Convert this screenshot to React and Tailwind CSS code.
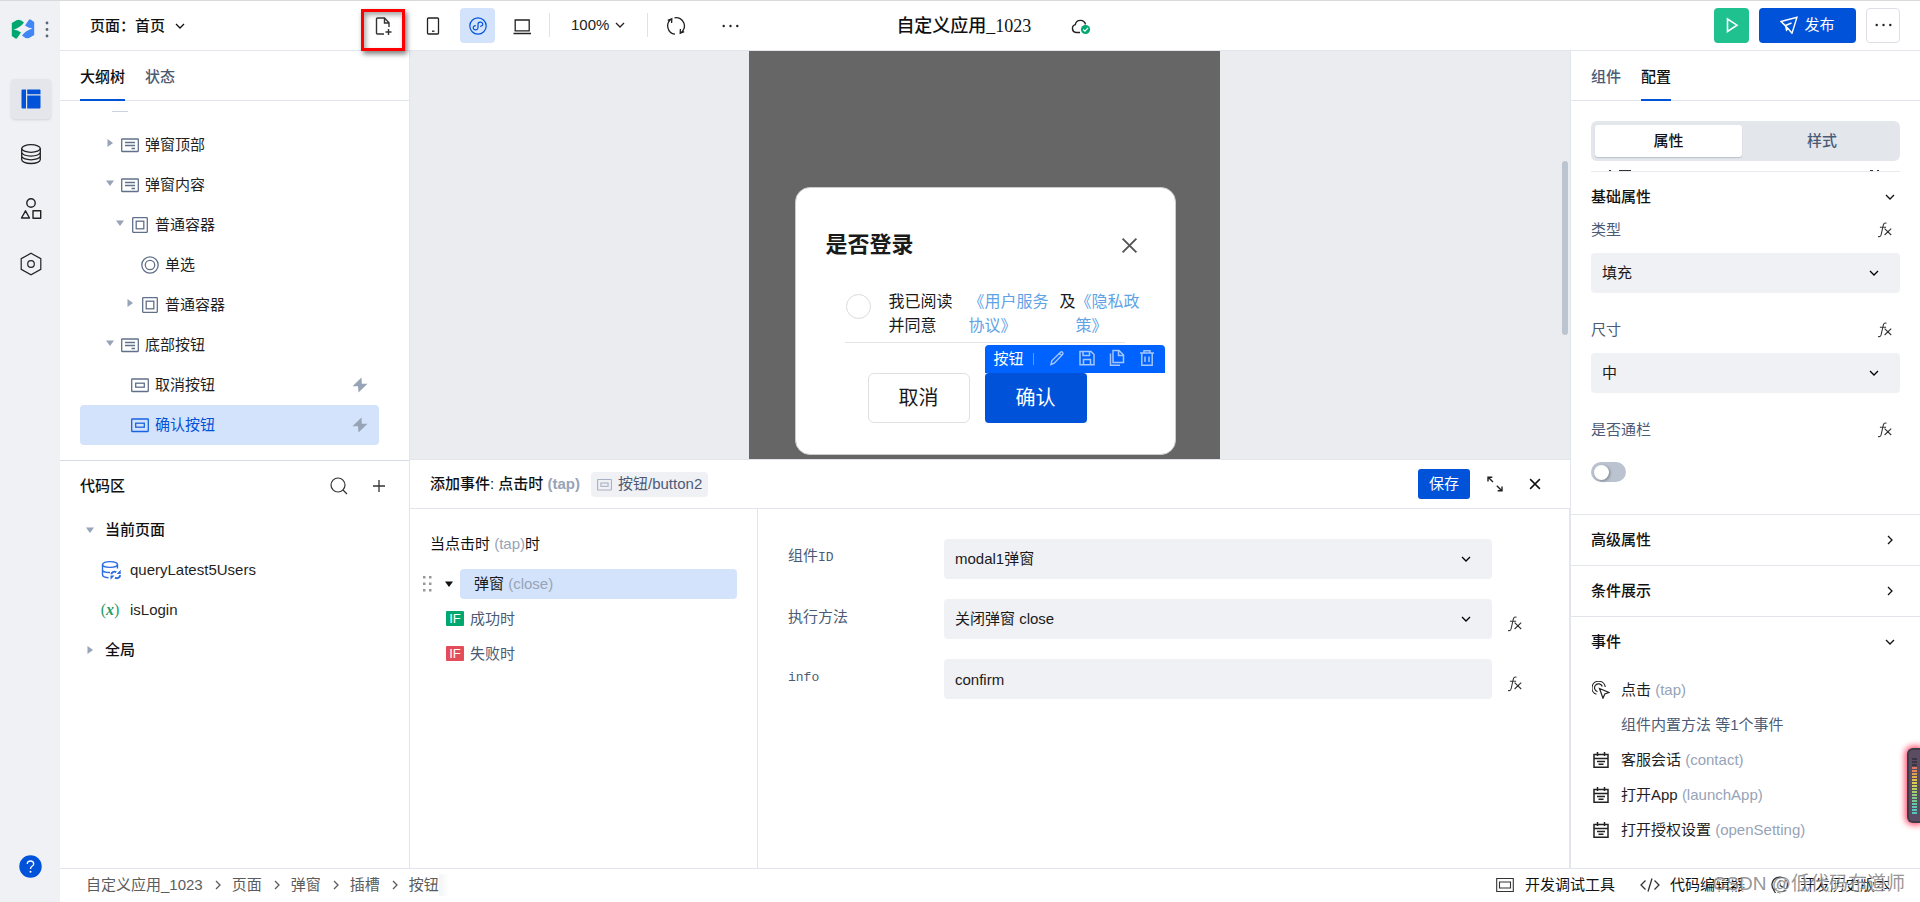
import React from "react";

/* ---------- icons ---------- */

function Icon({ size = 18, box = 18, sw = 1.3, className = "", children }) {
  return (
    <svg
      width={size}
      height={size}
      viewBox={`0 0 ${box} ${box}`}
      fill="none"
      stroke="currentColor"
      strokeWidth={sw}
      className={`shrink-0 ${className}`}
      aria-hidden="true"
    >
      {children}
    </svg>
  );
}

const Logo = () => (
  <svg width="24" height="20" viewBox="0 0 24 20" aria-hidden="true" className="shrink-0">
    <path d="M0.800 4 5.500 1.200Q9-0.500 13 3.400Q9.500 8.500 2.500 10.500Q7 11.200 10 13.600L6 19.200Q5.300 20 4.500 19.400L0.800 17z" fill="#00a870" />
    <path d="M23.200 16 18.500 18.800Q15 20.500 11 16.600Q14.500 11.500 21.500 9.500Q17 8.800 14 6.400L18 0.800Q18.700 0 19.500 0.600L23.200 3z" fill="#4086f5" />
  </svg>
);

const Chevron = ({ dir = "down", size = 10, className = "" }) => (
  <Icon size={size} box={10} sw={1.3} className={className}>
    {dir === "down" ? <path d="M1 3l4 4 4-4" /> : <path d="M3 1l4 4-4 4" />}
  </Icon>
);

const Caret = ({ open, className = "text-[#97a3b7]" }) => (
  <svg width="8" height="8" viewBox="0 0 8 8" fill="currentColor" className={`shrink-0 ${className}`} aria-hidden="true">
    {open ? <path d="M0 1.500h8L4 7z" /> : <path d="M1.500 0v8L7 4z" />}
  </svg>
);

const Slot = () => (
  <Icon>
    <rect x="0.700" y="3" width="16.600" height="12.500" rx="0.500" />
    <path d="M4 6.500h10M4 9.500h10M10.500 12.500H14" />
  </Icon>
);
const Box = () => (
  <Icon>
    <rect x="1.700" y="1.700" width="14.600" height="14.600" rx="0.500" />
    <rect x="5.200" y="5.200" width="7.600" height="7.600" />
  </Icon>
);
const Radio = () => (
  <Icon>
    <circle cx="9" cy="9" r="8.200" />
    <circle cx="9" cy="9" r="4.700" />
  </Icon>
);
const ButtonGlyph = ({ size = 18 }) => (
  <Icon size={size}>
    <rect x="0.700" y="3" width="16.600" height="12.500" rx="0.500" />
    <rect x="4.700" y="7.200" width="8.600" height="4" />
  </Icon>
);
const Bolt = () => (
  <svg width="16" height="16" viewBox="0 0 16 16" className="shrink-0 text-[#97a3b7]" fill="currentColor" aria-hidden="true">
    <path d="M9.500 0.500 0.500 9.200H6L6.500 15.500 15.500 6.800H9.800z" />
  </svg>
);
const Fx = () => (
  <Icon size={16} box={16} sw={1.1} className="text-[#333]">
    <path d="M9.500 1.300C7.500 0.500 6.600 1.500 6.200 3.500L4.200 12.500C3.800 14.300 2.900 15 1.100 14.400M2.900 5.300H9.100M7.600 6.600l6.600 6.400M14.200 6.600l-6.600 6.400" />
  </Icon>
);
const Cross = ({ size, sw = 1.5, className = "" }) => (
  <Icon size={size} box={16} sw={sw} className={className}>
    <path d="M1.500 1.500l13 13M14.500 1.500l-13 13" />
  </Icon>
);
const Calendar = () => (
  <Icon size={16} box={16} sw={1.5} className="text-[#222]">
    <path d="M1 2.500h14v12.700H1zM1 6.500h14M4.500 0v4M11.500 0v4M4 9.500h8M5.500 12.300h5" />
  </Icon>
);
const Dots = () => (
  <svg width="17" height="4" viewBox="0 0 17 4" fill="currentColor" className="shrink-0" aria-hidden="true">
    <circle cx="1.700" cy="2" r="1.200" />
    <circle cx="8.500" cy="2" r="1.200" />
    <circle cx="15.300" cy="2" r="1.200" />
  </svg>
);

/* ---------- shared controls ---------- */

function SelectBox({ id, value }) {
  return (
    <div className="relative w-full">
      <select
        id={id}
        defaultValue={value}
        className="h-10 w-full appearance-none rounded bg-[#f0f1f5] px-[11px] text-[15px] text-[#1a1a1a] outline-none"
      >
        <option>{value}</option>
      </select>
      <Chevron className="pointer-events-none absolute right-[21px] top-[15px]" />
    </div>
  );
}

function Tabs({ items, active }) {
  return (
    <div className="flex h-[50px] shrink-0 gap-5 border-b border-[#e2e5ec] px-5">
      {items.map((t, i) => (
        <button
          key={t}
          className={
            i === active
              ? "-mb-px border-b-2 border-[#0052d9] pt-1 font-medium text-[#111]"
              : "-mb-px border-b-2 border-transparent pt-1 font-medium text-[#4b5b76]"
          }
        >
          {t}
        </button>
      ))}
    </div>
  );
}

/* ---------- left ---------- */

function Rail() {
  return (
    <nav className="flex w-[60px] shrink-0 flex-col items-center bg-[#f0f1f5] pb-6 pl-px text-[#222]">
      <div className="flex h-[78px] w-full items-start gap-2 pl-2.5 pt-[18px]">
        <Logo />
        <svg width="6" height="20" viewBox="0 0 6 20" fill="#5b6579" aria-hidden="true">
          <circle cx="4" cy="4" r="1.400" />
          <circle cx="4" cy="10.500" r="1.400" />
          <circle cx="4" cy="17" r="1.400" />
        </svg>
      </div>
      <div className="flex flex-col gap-[15px]">
        <button aria-label="页面" className="flex size-10 items-center justify-center rounded bg-[#e4e6eb] shadow-sm">
          <svg width="20" height="20" viewBox="0 0 20 20" fill="#0052d9" aria-hidden="true">
            <path d="M1.500 0.500H5v19H1.500Q0.500 19.500 0.500 18.500V1.500Q0.500 0.500 1.500 0.500zM6.200 0.500h12.300Q19.500 0.500 19.500 1.500V5.300H6.200zM6.200 6.500h13.300v12Q19.500 19.500 18.500 19.500H6.200z" />
          </svg>
        </button>
        <button aria-label="数据" className="flex size-10 items-center justify-center">
          <Icon size={22} box={22} sw={1.3}>
            <ellipse cx="11" cy="5.500" rx="9.300" ry="3.800" />
            <path d="M1.700 5.500v11c0 2.200 4 4 9.300 4s9.300-1.800 9.300-4v-11M1.700 9.300c0 2.100 4 3.800 9.300 3.800s9.300-1.700 9.300-3.800M1.700 13c0 2.100 4 3.800 9.300 3.800s9.300-1.700 9.300-3.800" />
          </Icon>
        </button>
        <button aria-label="组件库" className="flex size-10 items-center justify-center">
          <Icon size={22} box={22} sw={1.4}>
            <circle cx="11" cy="5" r="4.200" />
            <path d="M5.500 12.800 1.500 20h8zM13 12.800h7.700v7.400H13z" strokeLinejoin="round" />
          </Icon>
        </button>
        <button aria-label="设置" className="flex size-10 items-center justify-center">
          <Icon size={24} box={24} sw={1.2}>
            <path d="M12 1.300 21.800 6.700v10.600L12 22.700 2.200 17.300V6.700z" />
            <circle cx="12" cy="12" r="3.300" />
          </Icon>
        </button>
      </div>
      <button aria-label="帮助" className="mt-auto">
        <svg width="23" height="23" viewBox="0 0 23 23" aria-hidden="true">
          <circle cx="11.500" cy="11.500" r="11.200" fill="#0052d9" />
          <path d="M8.300 9Q8.300 6 11.500 6T14.700 9Q14.700 10.300 13 11.300 11.500 12.200 11.500 14" fill="none" stroke="#fff" strokeWidth="1.300" />
          <circle cx="11.500" cy="16.800" r="1" fill="#fff" />
        </svg>
      </button>
    </nav>
  );
}

const TREE = [
  { t: "弹窗顶部", pad: "pl-[21px]", icon: Slot, caret: "closed" },
  { t: "弹窗内容", pad: "pl-[21px]", icon: Slot, caret: "open" },
  { t: "普通容器", pad: "pl-[31px]", icon: Box, caret: "open" },
  { t: "单选", pad: "pl-[41px]", icon: Radio },
  { t: "普通容器", pad: "pl-[41px]", icon: Box, caret: "closed" },
  { t: "底部按钮", pad: "pl-[21px]", icon: Slot, caret: "open" },
  { t: "取消按钮", pad: "pl-[31px]", icon: ButtonGlyph, bolt: true },
  { t: "确认按钮", pad: "pl-[31px]", icon: ButtonGlyph, bolt: true, active: true },
];

function LeftPanel() {
  return (
    <aside className="flex w-[350px] shrink-0 flex-col border-r border-[#e2e5ec]">
      <div className="flex min-h-0 flex-1 flex-col overflow-hidden border-b border-[#d5dae3]">
        <Tabs items={["大纲树", "状态"]} active={0} />
        <ul className="pl-5 pr-[30px]">
          <li className="h-6 pl-8 pt-2.5">
            <div className="h-px w-4 bg-[#cdd3de]" />
          </li>
          {TREE.map((n, i) => (
            <li
              key={i}
              className={`flex h-10 items-center rounded pr-[11px] ${n.pad} ${
                n.active ? "bg-[#d4e3fc] text-[#0052d9]" : "text-[#1f1f1f]"
              }`}
            >
              <span className="mr-0.5 flex w-[18px] justify-center pb-1">
                {n.caret && <Caret open={n.caret === "open"} />}
              </span>
              <span className={n.active ? "text-[#1a62e0]" : "text-[#61708a]"}>
                <n.icon />
              </span>
              <span className="ml-1.5 flex-1">{n.t}</span>
              {n.bolt && <Bolt />}
            </li>
          ))}
        </ul>
      </div>
      <div className="h-[407px] shrink-0">
        <div className="flex h-[49px] items-center px-5">
          <h2 className="flex-1 font-medium text-[#111]">代码区</h2>
          <button aria-label="搜索" className="mr-6">
            <Icon size={18} sw={1.2} className="text-[#333]">
              <circle cx="8" cy="8" r="7" />
              <path d="M13 13l4 4" />
            </Icon>
          </button>
          <button aria-label="新增" className="mr-[3px]">
            <Icon size={14} box={14} sw={1.3} className="text-[#333]">
              <path d="M7 1v12M1 7h12" />
            </Icon>
          </button>
        </div>
        <ul className="pl-[26px] text-[#1f1f1f]">
          <li className="flex h-10 items-center gap-[11px] font-medium text-[#111]">
            <Caret open />
            当前页面
          </li>
          <li className="flex h-10 items-center gap-[9px] pl-[15px]">
            <Icon size={20} box={20} sw={1.4} className="text-[#2b6be4]">
              <ellipse cx="9" cy="4.500" rx="7.500" ry="2.900" />
              <path d="M1.500 4.500v10.300c0 1.500 2.500 2.700 6 2.900M16.500 4.500v4M1.500 9.700c0 1.600 3 2.800 7.500 2.800" />
              <path d="M10.300 14.300c.5-2.500 3-3.300 5-2.200M19.200 15.200c-.5 2.800-3 3.600-5.200 2.500" strokeWidth="1.900" />
              <path d="M15.700 14h4v-4.200zM13.500 15.600h-4v4.200z" fill="currentColor" stroke="none" />
            </Icon>
            queryLatest5Users
          </li>
          <li className="flex h-10 items-center gap-[9px] pl-3.5">
            <span className="w-5 text-center font-['Liberation_Serif',serif] text-[16px] leading-5 text-[#1f9e68]">
              (<i className="font-bold">x</i>)
            </span>
            <span className="pl-px">isLogin</span>
          </li>
          <li className="flex h-10 items-center gap-[11px] font-medium text-[#111]">
            <Caret />
            全局
          </li>
        </ul>
      </div>
    </aside>
  );
}

/* ---------- header ---------- */

function Header() {
  return (
    <header className="flex h-[50px] shrink-0 items-center border-b border-[#e2e5ec] pb-px pl-[30px] pr-[15px] text-[#222]">
      <button className="flex w-[271px] items-center gap-2.5 pt-px font-medium text-[#111]">
        页面：首页
        <Chevron />
      </button>
      <button
        aria-label="新建页面"
        className="relative z-10 mt-2.5 flex h-[42px] w-11 shrink-0 items-start justify-center border-[3px] border-[#fe0000] pl-0.5 pt-[5px] shadow-[2px_3px_5px_rgba(0,0,0,0.5),inset_2px_3px_5px_rgba(0,0,0,0.35)]"
      >
        <Icon size={18} sw={1.4} className="text-[#333]">
          <path d="M9 17H2.500Q1.500 17 1.500 16V2Q1.500 1 2.500 1H9.500L14 5.800V10M9.500 1V6H14M13.500 12v6M10.500 15h6" />
        </Icon>
      </button>
      <div className="ml-[19px] flex items-center gap-[18px] pt-px">
        <button aria-label="手机" className="flex w-[18px] justify-center">
          <Icon size={18}>
            <rect x="3.500" y="1" width="11" height="16" rx="1" />
            <path d="M8 14.200h2.500" />
          </Icon>
        </button>
        <button aria-label="小程序" className="flex size-[35px] items-center justify-center rounded bg-[#d4e3fc] text-[#0052d9]">
          <Icon size={18} sw={1.2}>
            <circle cx="9" cy="9" r="8.200" />
            <path d="M6.800 8.700C4.500 8.700 4 10 4.300 11.300 5 13.600 9 13.300 9 10.800V7.200C9 4.600 13 4.400 13.700 6.600 14 8 13.500 9.300 11.200 9.300" />
          </Icon>
        </button>
        <button aria-label="电脑">
          <Icon size={18}>
            <path d="M2.200 3h14v10.800h-14zM0.500 16.500h17.500" />
          </Icon>
        </button>
      </div>
      <span className="ml-[18px] h-6 w-px bg-[#dfe2e9]" />
      <button className="ml-[21px] flex items-center gap-1.5">
        100%
        <Chevron />
      </button>
      <span className="ml-[22px] h-6 w-px bg-[#dfe2e9]" />
      <button aria-label="刷新" className="ml-[18px] pt-px">
        <Icon size={20} box={20} sw={1.3}>
          <path d="M5.500 3A8.300 8.300 0 0 0 9 18.200M1.800 4.300 5.800 2.700 5.600 7M8.500 1.800A8.300 8.300 0 0 1 14.500 17M18.200 15.700 14.200 17.300 14.400 13" />
        </Icon>
      </button>
      <button aria-label="更多操作" className="ml-9 pt-px">
        <Dots />
      </button>
      <div className="flex flex-1 items-center gap-10 pl-[157px] pt-0.5">
        <h1 className="whitespace-nowrap font-['Liberation_Serif','Noto_Sans_CJK_SC',serif] text-[18px] font-medium text-[#111]">
          自定义应用_1023
        </h1>
        <svg width="20" height="18" viewBox="0 0 20 18" aria-label="已保存" className="shrink-0">
          <path d="M9 15.500H5A4 4 0 0 1 4.300 7.700 5.200 5.200 0 0 1 14.500 7.500" fill="none" stroke="#222" strokeWidth="1.400" />
          <circle cx="14.500" cy="12.500" r="4.600" fill="#00a870" />
          <path d="M12.200 12.500l1.800 1.700 3-3.300" fill="none" stroke="#fff" strokeWidth="1.200" />
        </svg>
      </div>
      <button aria-label="预览" className="flex size-[35px] shrink-0 items-center justify-center rounded bg-[#1fc18f] text-white">
        <Icon size={16} box={16} sw={1.6}>
          <path d="M3.500 2v12.500L13 8.200z" />
        </Icon>
      </button>
      <button className="ml-2.5 flex h-[35px] w-[97px] shrink-0 items-center justify-center gap-1.5 rounded bg-[#0052d9] text-white">
        <Icon size={18} sw={1.4}>
          <path d="M1 5.500 17 1.200 12 17.300 8.500 13zM1 5.500 5.500 9.500 6.500 14 8.500 12M5.500 9.500 11.500 7" />
        </Icon>
        发布
      </button>
      <button aria-label="更多" className="ml-2.5 mr-[5px] flex h-[35px] w-[34px] shrink-0 items-center justify-center rounded border border-[#dcdfe6]">
        <Dots />
      </button>
    </header>
  );
}

/* ---------- canvas ---------- */

function Canvas() {
  return (
    <div className="flex min-h-0 flex-1 overflow-hidden bg-[#ebecf0]">
      <div className="flex flex-1 justify-center">
        <div className="w-[471px] bg-[#666] pl-[46px] pr-11 pt-[136px]">
          <section className="h-[268px] rounded-[15px] border border-[#ccc] bg-white pl-[30px] pr-[37px] pt-[42px] text-[#1a1a1a]">
            <div className="flex h-[30px] items-center justify-between">
              <h2 className="text-[22px] font-bold">是否登录</h2>
              <button aria-label="关闭弹窗">
                <Cross size={17} sw={1.8} className="text-[#555]" />
              </button>
            </div>
            <div className="ml-5 mt-[30px] flex text-[16px] leading-6">
              <input
                type="radio"
                id="agree"
                className="mr-[18px] mt-1 size-[25px] shrink-0 appearance-none rounded-full border border-[#dcdcdc]"
              />
              <label htmlFor="agree" className="mr-4 w-16 shrink-0">
                我已阅读并同意
              </label>
              <a href="#service" className="mr-[11px] w-20 shrink-0 text-[#5fa3e6]">
                《用户服务协议》
              </a>
              <span>及</span>
              <a href="#privacy" className="w-16 shrink-0 text-[#5fa3e6]">
                《隐私政策》
              </a>
            </div>
            <hr className="ml-[19px] mt-1 w-[280px] border-[#e3e3e3]" />
            <div className="ml-[42px] mt-[30px] flex gap-[15px] text-[20px]">
              <button className="h-[50px] w-[102px] rounded-md border border-[#e0e0e0]">取消</button>
              <div className="relative bg-[#e8f0ff]">
                <button className="h-[50px] w-[102px] rounded-sm bg-[#0052d9] text-white">确认</button>
                <div className="absolute bottom-full left-0 flex h-7 w-[180px] items-center rounded-t bg-[#0062ff] pl-[9px] text-[15px] text-white">
                  按钮
                  <span className="ml-[9px] mr-3.5 h-3 w-px bg-[#5c99ff]" />
                  <div className="flex gap-3 text-[#a3c6ff]">
                    <button aria-label="编辑" className="pb-0.5">
                      <Icon sw={1.4}>
                        <path d="M3 15.500 3.800 11.800 12.500 3.200Q13.500 2.300 14.500 3.200T14.700 5.300L6.200 14.200zM11.500 4.500l2.300 2.300" />
                      </Icon>
                    </button>
                    <button aria-label="保存组件" className="pb-0.5">
                      <Icon sw={1.5}>
                        <path d="M2 2.500h11l3 3v10.200H2zM5 2.500v4h6.500v-4M5.500 15.500v-5h7v5" />
                      </Icon>
                    </button>
                    <button aria-label="复制" className="pb-0.5">
                      <Icon sw={1.5}>
                        <path d="M5 1.500h6L15.500 6v7.500H5zM10.500 1.500V6.500h5M2.500 4.500v11.800H12" />
                      </Icon>
                    </button>
                    <button aria-label="删除" className="pb-0.5">
                      <Icon sw={1.5}>
                        <path d="M2 4h14M6 4V1.800h6V4M3.800 4v12.200h10.400V4M7 7.500v5.500M11 7.500v5.500" />
                      </Icon>
                    </button>
                  </div>
                </div>
              </div>
            </div>
          </section>
        </div>
      </div>
      <div className="w-3 shrink-0 pr-1 pt-[110px]">
        <div className="ml-1 h-[174px] w-1.5 rounded-full bg-[#bcc4d0]" />
      </div>
    </div>
  );
}

/* ---------- event panel ---------- */

function Branch({ color, text }) {
  return (
    <li className="flex h-[35px] items-center gap-1.5 pl-9 text-[#4b5b76]">
      <span className={`flex h-[15px] w-[18px] items-center justify-center rounded-[1px] text-[13px] leading-none text-white ${color}`}>IF</span>
      {text}
    </li>
  );
}

function Field({ id, label, latin, fx, children }) {
  return (
    <div className="flex h-10 items-center">
      <label htmlFor={id} className="w-[156px] shrink-0 pb-1 text-[#4b5b76]">
        {label}
        {latin && <span className="font-['Liberation_Mono',monospace] text-[13px]">{latin}</span>}
      </label>
      <div className="flex-1">{children}</div>
      <div className="flex w-[46px] shrink-0 justify-center pt-2.5">
        {fx && (
          <button aria-label="表达式">
            <Fx />
          </button>
        )}
      </div>
    </div>
  );
}

function EventPanel() {
  return (
    <section className="flex h-[409px] shrink-0 flex-col border-t border-[#e2e5ec]">
      <div className="flex h-[49px] shrink-0 items-center border-b border-[#e2e5ec] pl-5 pr-[29px]">
        <h2 className="text-[#111]">
          <span className="font-medium">添加事件: 点击时 </span>
          <span className="font-bold text-[#97a3b7]">(tap)</span>
        </h2>
        <span className="ml-[11px] flex h-[25px] items-center gap-1.5 rounded bg-[#f0f1f5] px-1.5 text-[#4b5b76]">
          <span className="text-[#a5b0c2]">
            <ButtonGlyph size={15} />
          </span>
          按钮/button2
        </span>
        <button className="ml-auto h-[30px] w-[52px] rounded-[3px] bg-[#0052d9] text-white">保存</button>
        <button aria-label="展开" className="ml-4">
          <Icon size={18} sw={1.4} className="text-[#222]">
            <path d="M2 6.500V2.200H6.300M2.200 2.200 7 7M16 11.500v4.300H11.700M15.800 15.800 10.800 10.800" />
          </Icon>
        </button>
        <button aria-label="关闭" className="ml-[25px]">
          <Cross size={12} sw={2} className="text-[#111]" />
        </button>
      </div>
      <div className="flex min-h-0 flex-1">
        <div className="w-[348px] shrink-0 border-r border-[#e2e5ec] pt-5">
          <p className="flex h-[30px] items-center pl-5 text-[#111]">
            当点击时&nbsp;<span className="text-[#97a3b7]">(tap)</span>时
          </p>
          <ul className="mt-2.5">
            <li className="mb-0.5 flex h-[30px] items-center pl-[13px] pr-5">
              <svg width="9" height="16" viewBox="0 0 9 16" fill="#999" aria-hidden="true">
                <path d="M0 0h2.500v2.500H0zM6 0h2.500v2.500H6zM0 6.500h2.500V9H0zM6 6.500h2.500V9H6zM0 13h2.500v2.500H0zM6 13h2.500v2.500H6z" />
              </svg>
              <span className="ml-[13px] mr-[7px]">
                <Caret open className="text-[#111]" />
              </span>
              <span className="flex h-[30px] flex-1 items-center rounded bg-[#d4e3fc] pl-3.5 text-[#1a1a1a]">
                弹窗&nbsp;<span className="text-[#97a3b7]">(close)</span>
              </span>
            </li>
            <Branch color="bg-[#00a870]" text="成功时" />
            <Branch color="bg-[#e34d59]" text="失败时" />
          </ul>
        </div>
        <form className="flex flex-1 flex-col gap-5 border-r border-[#e2e5ec] pl-[30px] pr-[31px] pt-[30px]">
          <Field id="component" label="组件" latin="ID">
            <SelectBox id="component" value="modal1弹窗" />
          </Field>
          <Field id="method" label="执行方法" fx>
            <SelectBox id="method" value="关闭弹窗 close" />
          </Field>
          <Field id="info" latin="info" fx>
            <input id="info" defaultValue="confirm" className="block h-10 w-full rounded bg-[#f0f1f5] px-[11px] text-[#1a1a1a] outline-none" />
          </Field>
        </form>
      </div>
    </section>
  );
}

/* ---------- right ---------- */

function PropLabel({ id, text }) {
  return (
    <div className="flex h-[30px] items-center justify-between pr-[7px] text-[#4b5b76]">
      <label htmlFor={id}>{text}</label>
      <button aria-label={`${text}表达式`}>
        <Fx />
      </button>
    </div>
  );
}

function Section({ text, dir }) {
  return (
    <button className="flex h-[51px] w-full items-center justify-between border-t border-[#e2e5ec] pl-5 pr-[25px] font-medium text-[#111]">
      {text}
      <Chevron dir={dir} />
    </button>
  );
}

const EVENTS = [
  ["客服会话", "(contact)"],
  ["打开App", "(launchApp)"],
  ["打开授权设置", "(openSetting)"],
];

function RightPanel() {
  return (
    <aside className="flex w-[350px] shrink-0 flex-col border-l border-[#e2e5ec]">
      <Tabs items={["组件", "配置"]} active={1} />
      <div className="px-5 pb-8 pt-5">
        <div className="flex h-10 gap-1.5 rounded-md bg-[#e3e6eb] p-1 font-medium">
          <button className="w-[147px] rounded-[3px] bg-white text-[#111] shadow-[0_1px_1px_#b9c1ce]">属性</button>
          <button className="flex-1 text-[#4b5b76]">样式</button>
        </div>
        <div className="mt-[9px] border-b border-[#e8eaef]">
          <svg width="309" height="1" viewBox="0 0 309 1" className="block" fill="#333" aria-hidden="true">
            <path d="M18 0h2v1h-2zM28 0h12v1H28zM279 0h3v1h-3zM286 0h2v1h-2z" />
          </svg>
        </div>
        <button className="mt-2.5 flex h-[30px] w-full items-center justify-between pr-[5px] font-medium text-[#111]">
          基础属性
          <Chevron />
        </button>
        <div className="mt-[3px] flex flex-col gap-[22px]">
          <div className="flex flex-col gap-2">
            <PropLabel id="type" text="类型" />
            <SelectBox id="type" value="填充" />
          </div>
          <div className="flex flex-col gap-2">
            <PropLabel id="size" text="尺寸" />
            <SelectBox id="size" value="中" />
          </div>
          <div className="flex flex-col gap-[17px]">
            <PropLabel id="block" text="是否通栏" />
            <input
              id="block"
              type="checkbox"
              role="switch"
              className="flex h-5 w-[35px] appearance-none items-center rounded-full bg-[#bbc3d1] pl-[3px] before:size-[15px] before:rounded-full before:bg-white before:shadow-[1px_1px_3px_rgba(0,0,0,0.35)]"
            />
          </div>
        </div>
      </div>
      <Section text="高级属性" dir="right" />
      <Section text="条件展示" dir="right" />
      <Section text="事件" dir="down" />
      <ul className="pl-[22px] pt-[5px] text-[#1f1f1f]">
        <li className="flex h-[35px] items-center">
          <Icon size={18} sw={1.2} className="-ml-px mr-px text-[#222]">
            <path d="M7.500 7.500 17 11.500 12.800 13 11 17.200zM4.500 13.300A6.700 6.700 0 1 1 13.300 6M5.500 10.700A4 4 0 1 1 10.300 5.500" />
          </Icon>
          <span className="ml-2.5">
            点击 <span className="text-[#97a3b7]">(tap)</span>
          </span>
        </li>
        <li className="flex h-[35px] items-center pl-7 text-[#4b5b76]">组件内置方法 等1个事件</li>
        {EVENTS.map(([name, code]) => (
          <li key={code} className="flex h-[35px] items-center">
            <Calendar />
            <span className="ml-3">
              {name} <span className="text-[#97a3b7]">{code}</span>
            </span>
          </li>
        ))}
      </ul>
    </aside>
  );
}

/* ---------- footer ---------- */

const CRUMBS = ["自定义应用_1023", "页面", "弹窗", "插槽", "按钮"];

function Footer() {
  return (
    <footer className="relative flex h-[34px] shrink-0 items-center border-t border-[#e2e5ec] pb-0.5 pl-[26px] pr-[30px]">
      <nav className="flex items-center text-[#5c5c5c]">
        {CRUMBS.map((c, i) => (
          <React.Fragment key={c}>
            {i > 0 && <Chevron dir="right" className="ml-2.5 mr-[9px]" />}
            <a href="#crumb">{c}</a>
          </React.Fragment>
        ))}
        <span className="h-[22px] w-2.5 bg-gradient-to-r from-[#f3f4f6] to-white" />
      </nav>
      <div className="ml-auto flex items-center text-[#111]">
        <button className="flex items-center gap-[11px]">
          <Icon sw={1.1} className="text-[#333]">
            <path d="M0.700 2.500h16.600v13H0.700zM3.500 6h11v6h-11z" />
          </Icon>
          开发调试工具
        </button>
        <button className="ml-[25px] flex items-center gap-2.5">
          <Icon size={20} box={20} sw={1.3} className="text-[#333]">
            <path d="M5.500 5.500 1 10l4.500 4.500M14.500 5.500 19 10l-4.500 4.500M12 3.500 8 16.500" />
          </Icon>
          代码编辑器
        </button>
        <button className="ml-[26px] flex items-center gap-[11px]">
          <Icon sw={1.3} className="text-[#333]">
            <path d="M3 14A7.700 7.700 0 1 1 6.500 16.200M5.500 12.500 2.800 14.300 4.500 17M9 4.500V9.500l3.500 2" />
          </Icon>
          开发历史版本
        </button>
      </div>
      <span className="pointer-events-none absolute right-[15px] top-0 whitespace-nowrap text-[19px] leading-[30px] text-[#7a7a7a]/80 [text-shadow:1px_1px_1px_#fff]">
        CSDN @低代码布道师
      </span>
    </footer>
  );
}

const METER = [
  "bg-[#3b3445]", "bg-[#3b3445]", "bg-[#3b3445]", "bg-[#e07a5f]", "bg-[#e0895b]", "bg-[#e0a050]", "bg-[#dfb14c]",
  "bg-[#dcc04b]", "bg-[#d9cd4e]", "bg-[#c9d257]", "bg-[#b4d162]", "bg-[#a3cf6e]", "bg-[#8fcd7a]", "bg-[#80cb85]",
  "bg-[#74ca92]", "bg-[#68c99f]", "bg-[#5fc9ab]", "bg-[#57c8b4]", "bg-[#50c8bb]",
];

export default function App() {
  return (
    <div className="relative flex h-screen min-h-[860px] overflow-hidden border-t border-[#d9d9d9] bg-white font-['Liberation_Sans','Noto_Sans_CJK_SC',sans-serif] text-[15px] leading-[22px]">
      <Rail />
      <div className="flex min-w-0 flex-1 flex-col">
        <Header />
        <div className="flex min-h-0 flex-1">
          <LeftPanel />
          <main className="flex min-w-0 flex-1 flex-col">
            <Canvas />
            <EventPanel />
          </main>
          <RightPanel />
        </div>
        <Footer />
      </div>
      <div className="absolute bottom-[79px] right-0 flex h-[75px] w-[13px] flex-col items-center gap-px rounded-l-md border-2 border-r-0 border-[#3f3a48] bg-[#5a4d63] py-2 shadow-[0_0_6px_2px_#ff4d6d]">
        {METER.map((c, i) => (
          <span key={i} className={`h-0.5 w-[5px] shrink-0 ${c}`} />
        ))}
      </div>
    </div>
  );
}
